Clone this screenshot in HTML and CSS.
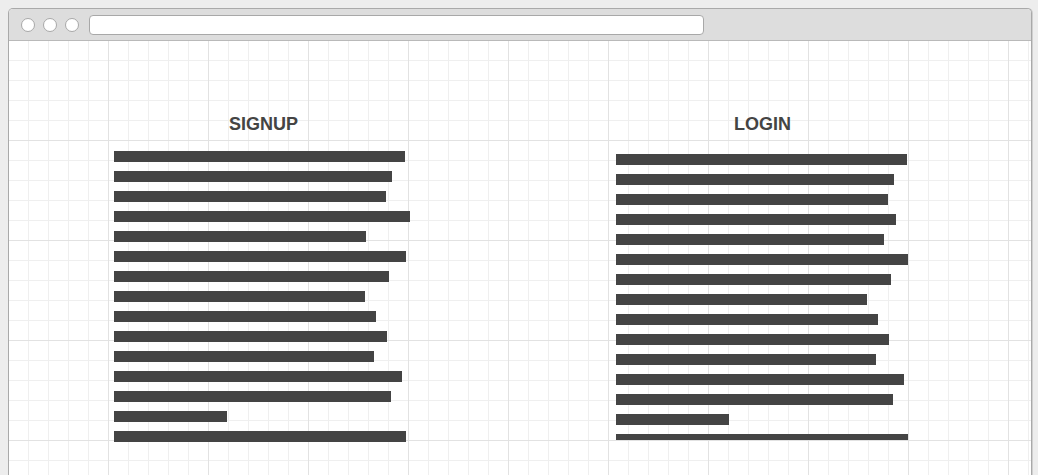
FILE: index.html
```html
<!DOCTYPE html>
<html lang="en">
<head>
<meta charset="utf-8">
<title>Signup / Login wireframe</title>
<link rel="stylesheet" href="styles.css">
</head>
<body>
<div class="window">
  <div class="titlebar">
    <div class="dots">
      <span class="dot"></span>
      <span class="dot"></span>
      <span class="dot"></span>
    </div>
    <div class="urlbar"></div>
  </div>
  <div class="canvas">
    <section class="col col-signup">
      <h2 class="col-title">SIGNUP</h2>
      <div class="lines">
        <div class="line" style="width:291px"></div>
        <div class="line" style="width:278px"></div>
        <div class="line" style="width:272px"></div>
        <div class="line" style="width:296px"></div>
        <div class="line" style="width:252px"></div>
        <div class="line" style="width:292px"></div>
        <div class="line" style="width:275px"></div>
        <div class="line" style="width:251px"></div>
        <div class="line" style="width:262px"></div>
        <div class="line" style="width:273px"></div>
        <div class="line" style="width:260px"></div>
        <div class="line" style="width:288px"></div>
        <div class="line" style="width:277px"></div>
        <div class="line" style="width:113px"></div>
        <div class="line" style="width:292px"></div>
      </div>
    </section>
    <section class="col col-login">
      <h2 class="col-title">LOGIN</h2>
      <div class="lines lines-clipped">
        <div class="line" style="width:291px"></div>
        <div class="line" style="width:278px"></div>
        <div class="line" style="width:272px"></div>
        <div class="line" style="width:280px"></div>
        <div class="line" style="width:268px"></div>
        <div class="line" style="width:292px"></div>
        <div class="line" style="width:275px"></div>
        <div class="line" style="width:251px"></div>
        <div class="line" style="width:262px"></div>
        <div class="line" style="width:273px"></div>
        <div class="line" style="width:260px"></div>
        <div class="line" style="width:288px"></div>
        <div class="line" style="width:277px"></div>
        <div class="line" style="width:113px"></div>
        <div class="line" style="width:292px"></div>
      </div>
    </section>
  </div>
</div>
</body>
</html>
```

FILE: styles.css
```css
html, body {
  margin: 0;
  padding: 0;
}

body {
  background: #ededed;
  padding: 8px 8px 0 8px;
  height: 475px;
  box-sizing: border-box;
  overflow: hidden;
  font-family: "Liberation Sans", Arial, sans-serif;
}

.window {
  box-sizing: border-box;
  width: 1024px;
  height: 467px;
  border: 1px solid #a9a9a9;
  border-bottom: none;
  border-radius: 5px 5px 0 0;
  box-shadow: 1px 0 0 #cfcfcf;
  background: #fff;
  display: flex;
  flex-direction: column;
  overflow: hidden;
}

.titlebar {
  flex: 0 0 auto;
  height: 31px;
  background: #dddddd;
  border-bottom: 1px solid #b9b9b9;
  display: flex;
  align-items: center;
  padding-left: 12px;
  gap: 10px;
}

.dots {
  display: flex;
  gap: 8px;
}

.dot {
  box-sizing: border-box;
  width: 14px;
  height: 14px;
  border-radius: 50%;
  background: #fff;
  border: 1px solid #a8a8a8;
}

.urlbar {
  box-sizing: border-box;
  width: 615px;
  height: 20px;
  background: #fff;
  border: 1px solid #a8a8a8;
  border-radius: 4px;
}

.canvas {
  flex: 1 1 auto;
  min-height: 0;
  display: flex;
  align-items: flex-start;
  padding: 72px 0 0 105px;
  gap: 203px;
  background-color: #fff;
  background-image:
    linear-gradient(to right, #e2e2e2 1px, transparent 1px),
    linear-gradient(to bottom, #e2e2e2 1px, transparent 1px),
    linear-gradient(to right, #efefef 1px, transparent 1px),
    linear-gradient(to bottom, #efefef 1px, transparent 1px);
  background-size: 100px 100px, 100px 100px, 20px 20px, 20px 20px;
  background-position: -1px -1px, -1px -1px, -1px -1px, -1px -1px;
}

.col {
  display: flex;
  flex-direction: column;
}

.col-signup {
  width: 299px;
}

.col-login {
  width: 293px;
}

.col-title {
  margin: 0;
  font-size: 18px;
  line-height: 22px;
  font-weight: 700;
  color: #444444;
  text-align: center;
}

.lines {
  display: flex;
  flex-direction: column;
  gap: 9px;
  margin-top: 16px;
}

.lines-clipped {
  margin-top: 19px;
  height: 286px;
  overflow: hidden;
}

.line {
  flex: 0 0 auto;
  height: 11px;
  background: #444444;
}
```
